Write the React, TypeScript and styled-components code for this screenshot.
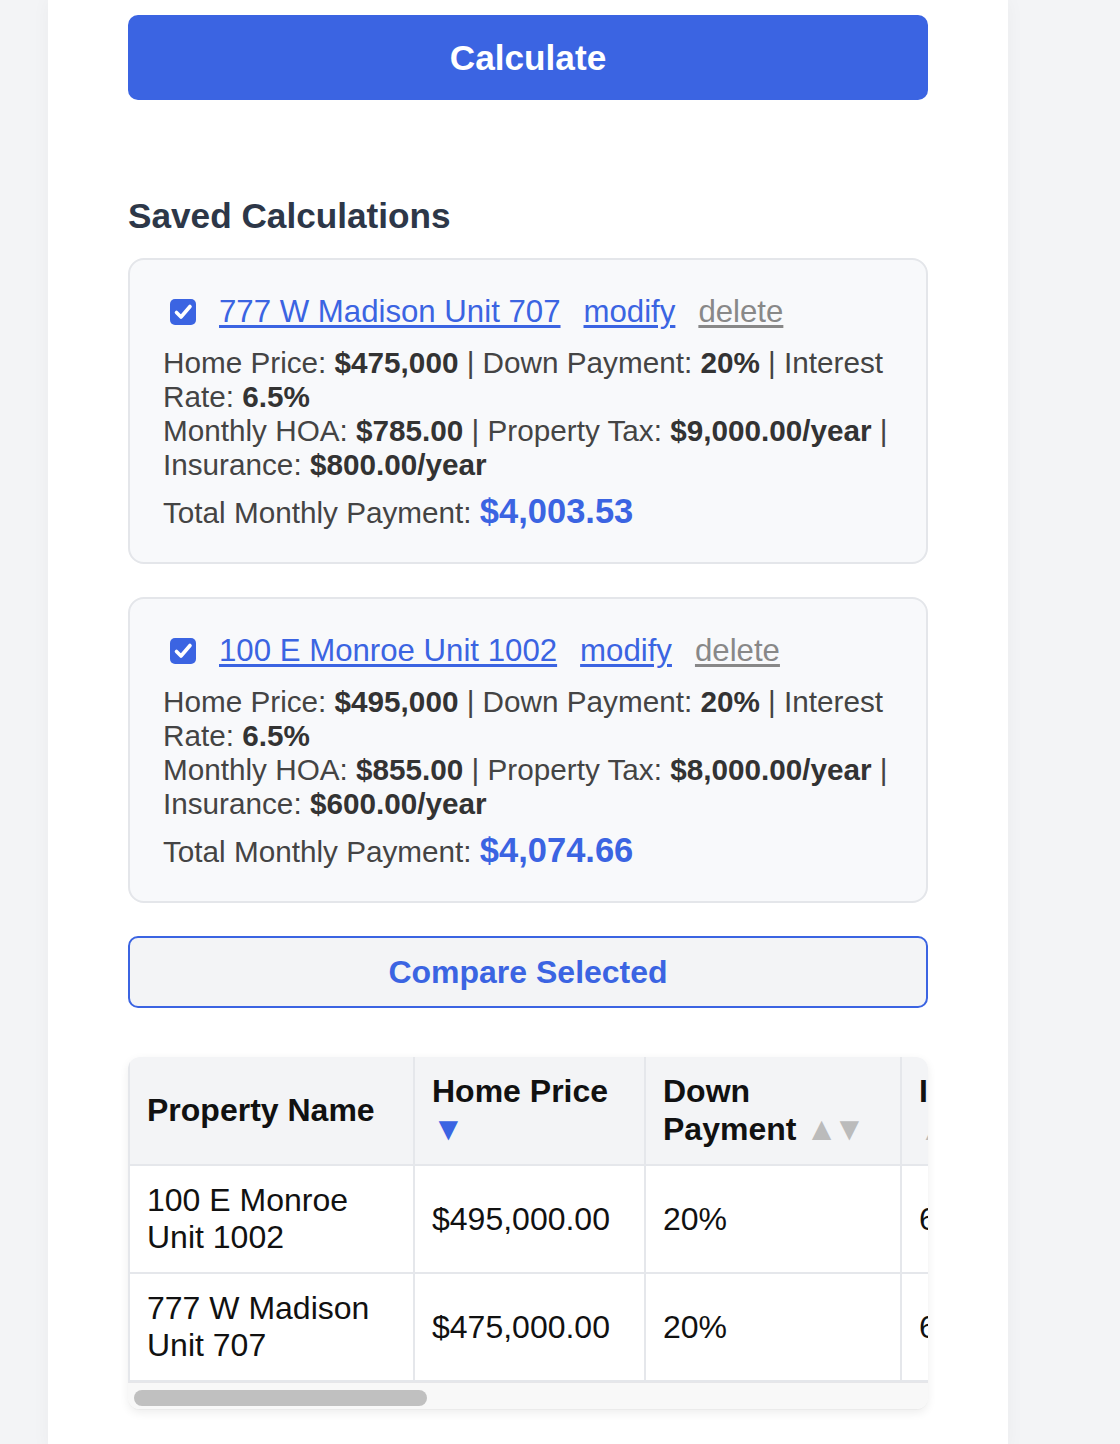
import React from 'react';
import styled, { createGlobalStyle } from 'styled-components';

const GlobalStyle = createGlobalStyle`
  html, body {
    margin: 0;
    padding: 0;
    background: #f3f4f6;
    font-family: "Liberation Sans", Arial, Helvetica, sans-serif;
  }
`;

const Page = styled.div`
  min-height: 1444px;
  padding-left: 48px;
  background: #f3f4f6;
`;

const Panel = styled.div`
  width: 960px;
  min-height: 1444px;
  box-sizing: border-box;
  padding: 15px 80px 40px;
  background: #ffffff;
  box-shadow: 0 0 18px rgba(0, 0, 0, 0.04);
`;

const CalcButton = styled.button`
  display: block;
  width: 100%;
  height: 85px;
  border: none;
  border-radius: 10px;
  background: #3b64e2;
  color: #ffffff;
  font-family: inherit;
  font-size: 35.2px;
  font-weight: 700;
  cursor: pointer;
`;

const SectionTitle = styled.h2`
  margin: 96px 0 22px;
  font-size: 35.2px;
  font-weight: 700;
  color: #2d3748;
`;

const Card = styled.div`
  border: 2px solid #e4e6ea;
  border-radius: 16px;
  background: #f8f9fb;
  padding: 34px 30px 30px 33px;
  margin-bottom: 33px;
`;

const TitleRow = styled.div`
  display: flex;
  align-items: center;
  gap: 23px;
  height: 36px;
`;

const Check = styled.span`
  display: inline-flex;
  align-items: center;
  justify-content: center;
  flex: none;
  width: 26px;
  height: 26px;
  margin-left: 7px;
  border-radius: 5px;
  background: #3b64e2;
`;

const TextLink = styled.a<{ $muted?: boolean }>`
  font-size: 31.2px;
  color: ${p => (p.$muted ? '#888888' : '#3b64e2')};
  text-decoration: underline;
  text-underline-offset: 3px;
  cursor: pointer;
`;

const Details = styled.div`
  margin-top: 16px;
  font-size: 29.7px;
  line-height: 34px;
  color: #444444;

  b {
    color: #333333;
  }
`;

const Total = styled.div`
  margin-top: 10px;
  font-size: 29.7px;
  line-height: 38px;
  color: #444444;
`;

const TotalValue = styled.b`
  font-size: 34.5px;
  color: #3b64e2;
`;

const CompareButton = styled.button`
  display: block;
  width: 100%;
  height: 72px;
  border: 2px solid #3b64e2;
  border-radius: 10px;
  background: #f3f4f6;
  color: #3b64e2;
  font-family: inherit;
  font-size: 32px;
  font-weight: 700;
  cursor: pointer;
`;

const TableWrap = styled.div`
  margin-top: 49px;
  border-radius: 12px;
  border-bottom: 1px solid #ebebeb;
  box-shadow: 0 3px 10px rgba(0, 0, 0, 0.07);
  overflow: hidden;
  background: #ffffff;
`;

const Scroller = styled.div`
  overflow-x: auto;
  scrollbar-width: none;

  &::-webkit-scrollbar {
    display: none;
  }
`;

const ScrollTrack = styled.div`
  height: 27px;
  padding: 7px 0 0 6px;
  box-sizing: border-box;
  background: #f8f8f8;
  border-top: 1px solid #e6e6e9;
`;

const ScrollThumb = styled.div<{ $w: number }>`
  width: ${p => p.$w}px;
  height: 16px;
  border-radius: 8px;
  background: #c0c0c0;
`;

const Table = styled.table`
  width: 2115px;
  table-layout: fixed;
  border-collapse: collapse;
  font-size: 32px;
  color: #111111;
`;

const Th = styled.th<{ $w: number }>`
  box-sizing: border-box;
  width: ${p => p.$w}px;
  padding: 16px 17px;
  text-align: left;
  vertical-align: middle;
  font-weight: 700;
  background: #f3f4f6;
  border: 2px solid #e5e7eb;
  border-top: none;
`;

const Td = styled.td`
  padding: 16px 17px;
  vertical-align: middle;
  border: 2px solid #e5e7eb;
`;

const Sort = styled.span<{ $active?: boolean }>`
  font-size: 33px;
  letter-spacing: -5px;
  color: ${p => (p.$active ? '#3b64e2' : '#bbbbbb')};
`;

type Saved = {
  name: string;
  price: string;
  down: string;
  rate: string;
  hoa: string;
  tax: string;
  insurance: string;
  total: string;
};

const saved: Saved[] = [
  {
    name: '777 W Madison Unit 707',
    price: '$475,000',
    down: '20%',
    rate: '6.5%',
    hoa: '$785.00',
    tax: '$9,000.00/year',
    insurance: '$800.00/year',
    total: '$4,003.53',
  },
  {
    name: '100 E Monroe Unit 1002',
    price: '$495,000',
    down: '20%',
    rate: '6.5%',
    hoa: '$855.00',
    tax: '$8,000.00/year',
    insurance: '$600.00/year',
    total: '$4,074.66',
  },
];

const rows = [
  ['100 E Monroe Unit 1002', '$495,000.00', '20%', '6.5%', '$855.00', '$8,000.00', '$600.00', '$4,074.66'],
  ['777 W Madison Unit 707', '$475,000.00', '20%', '6.5%', '$785.00', '$9,000.00', '$800.00', '$4,003.53'],
];

const columns: { label: string; w: number; sort?: 'none' | 'desc' | 'both' }[] = [
  { label: 'Property Name', w: 285, sort: 'none' },
  { label: 'Home Price', w: 231, sort: 'desc' },
  { label: 'Down Payment', w: 256, sort: 'both' },
  { label: 'Interest Rate', w: 250, sort: 'both' },
  { label: 'Monthly HOA', w: 250, sort: 'both' },
  { label: 'Property Tax', w: 270, sort: 'both' },
  { label: 'Insurance', w: 250, sort: 'both' },
  { label: 'Total Monthly Payment', w: 323, sort: 'both' },
];

const CheckIcon = () => (
  <svg width="26" height="26" viewBox="0 0 26 26" fill="none" stroke="#fff" strokeWidth={3.6} strokeLinecap="round" strokeLinejoin="round">
    <path d="M6.5 13.5l4.5 4.5L20 7.5" />
  </svg>
);

const App: React.FC = () => {
  return (
    <>
      <GlobalStyle />
      <Page>
        <Panel>
          <CalcButton>Calculate</CalcButton>

          <SectionTitle>Saved Calculations</SectionTitle>

          {saved.map(item => (
            <Card key={item.name}>
              <TitleRow>
                <Check>
                  <CheckIcon />
                </Check>
                <TextLink>{item.name}</TextLink>
                <TextLink>modify</TextLink>
                <TextLink $muted>delete</TextLink>
              </TitleRow>
              <Details>
                Home Price: <b>{item.price}</b> | Down Payment: <b>{item.down}</b> | Interest Rate:{' '}
                <b>{item.rate}</b>
                <br />
                Monthly HOA: <b>{item.hoa}</b> | Property Tax: <b>{item.tax}</b> | Insurance:{' '}
                <b>{item.insurance}</b>
              </Details>
              <Total>
                Total Monthly Payment: <TotalValue>{item.total}</TotalValue>
              </Total>
            </Card>
          ))}

          <CompareButton>Compare Selected</CompareButton>

          <TableWrap>
            <Scroller>
              <Table>
                <thead>
                  <tr>
                    {columns.map(col => (
                      <Th key={col.label} $w={col.w}>
                        {col.label}
                        {col.sort === 'desc' && (
                          <>
                            {' '}
                            <Sort $active>▼</Sort>
                          </>
                        )}
                        {col.sort === 'both' && (
                          <>
                            {' '}
                            <Sort>▲▼</Sort>
                          </>
                        )}
                      </Th>
                    ))}
                  </tr>
                </thead>
                <tbody>
                  {rows.map(r => (
                    <tr key={r[0]}>
                      {r.map((cell, i) => (
                        <Td key={i}>{cell}</Td>
                      ))}
                    </tr>
                  ))}
                </tbody>
              </Table>
            </Scroller>
            <ScrollTrack>
              <ScrollThumb $w={293} />
            </ScrollTrack>
          </TableWrap>
        </Panel>
      </Page>
    </>
  );
};

export default App;
